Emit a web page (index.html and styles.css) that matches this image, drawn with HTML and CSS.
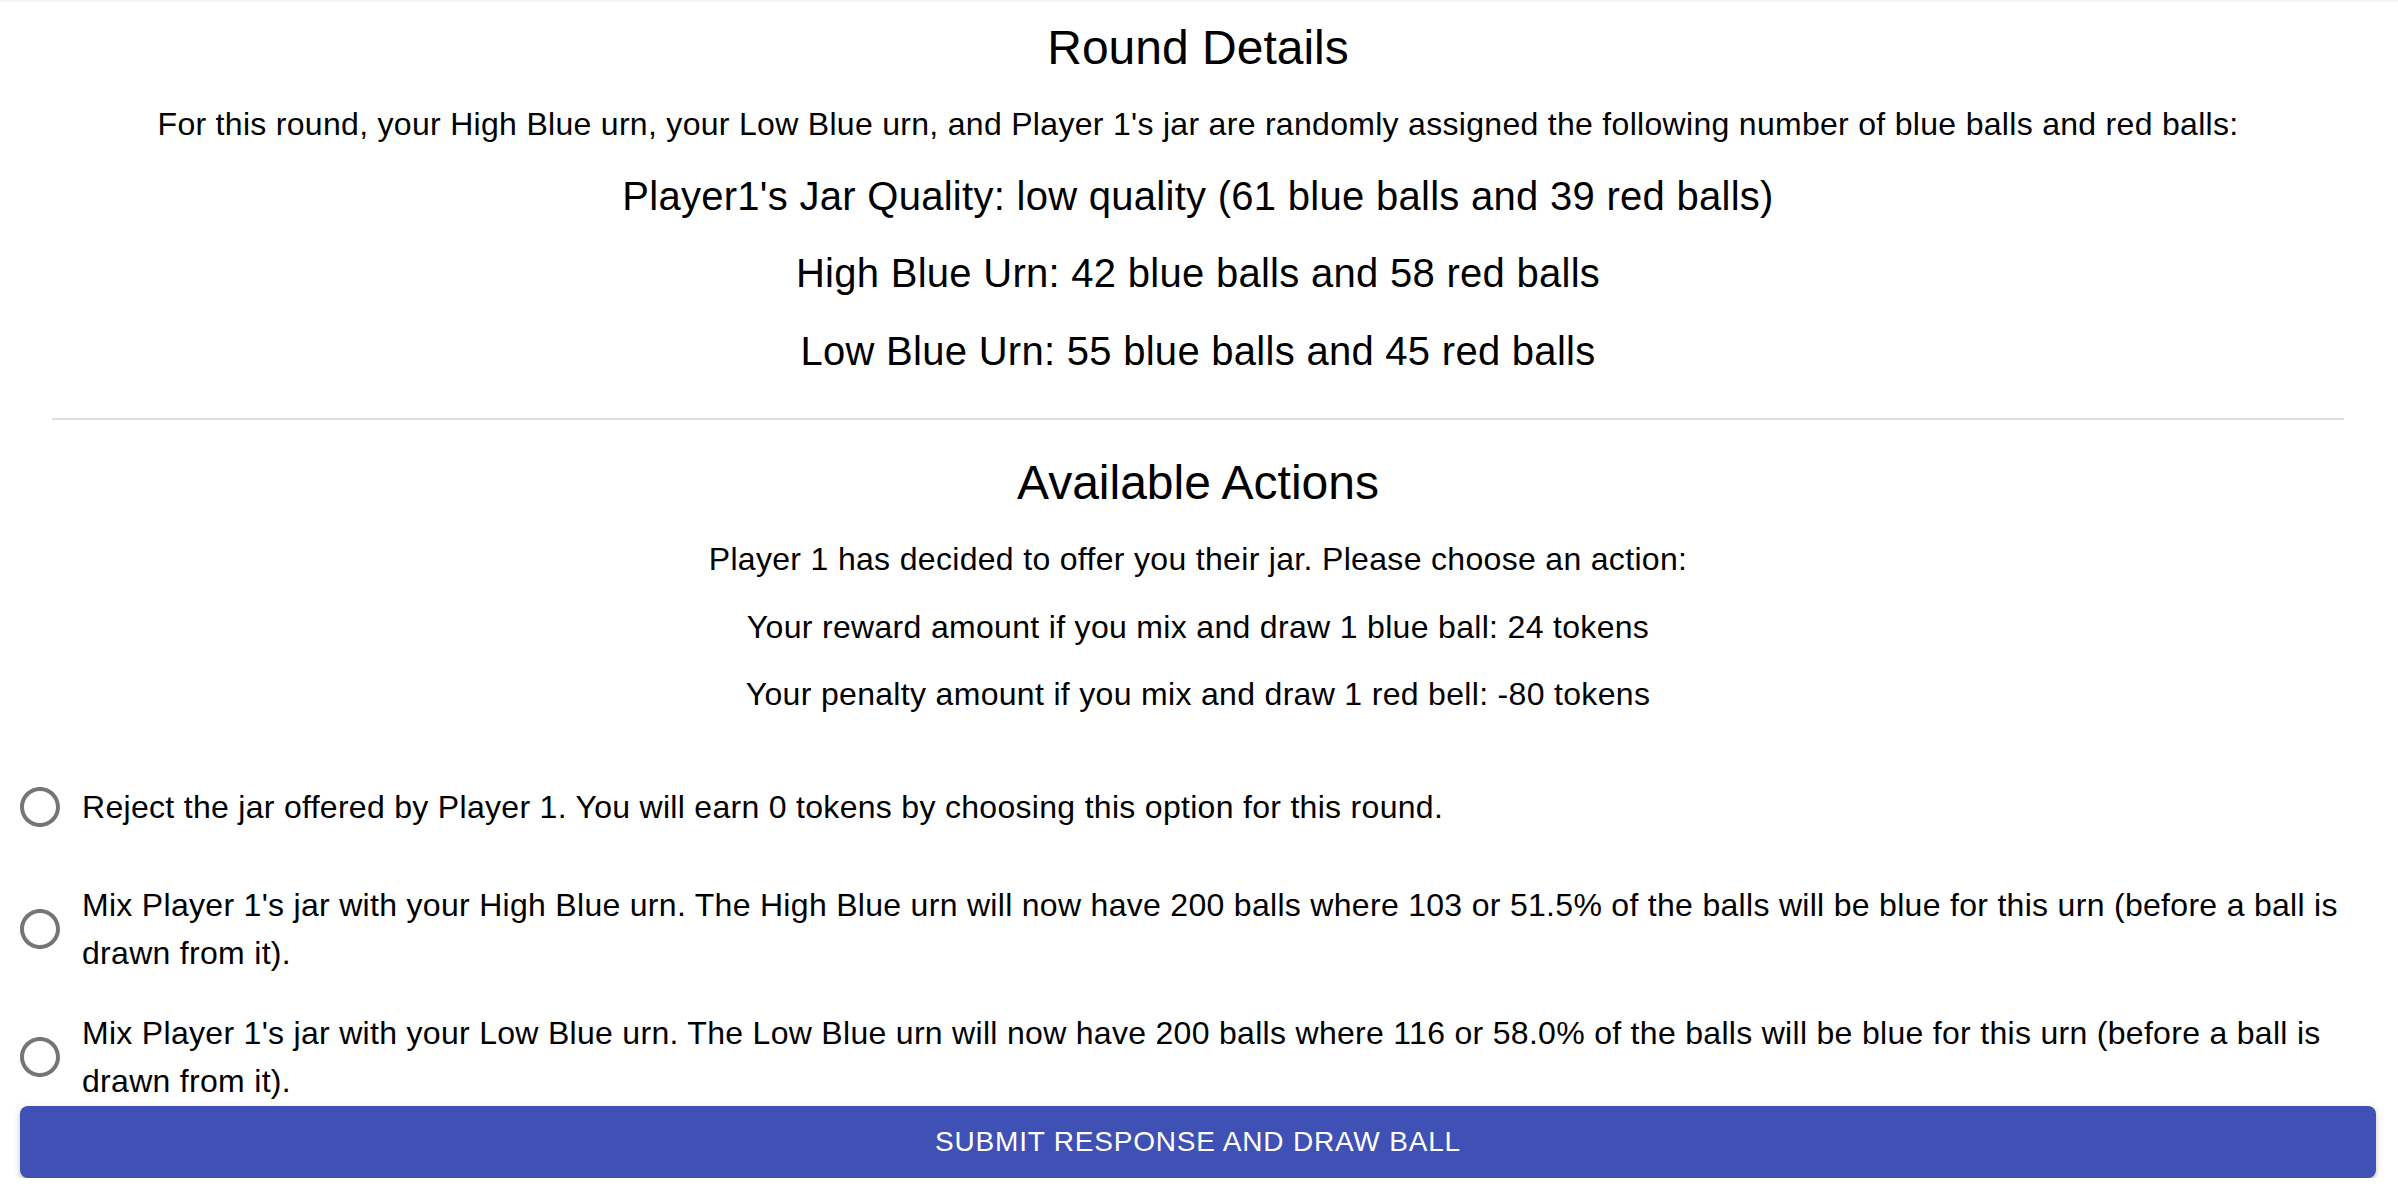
FILE: index.html
```html
<!DOCTYPE html>
<html lang="en">
<head>
<meta charset="utf-8">
<title>Round Details</title>
<link rel="stylesheet" href="styles.css">
</head>
<body>
<div class="page">
  <section class="details">
    <h2 class="title">Round Details</h2>
    <p class="intro">For this round, your High Blue urn, your Low Blue urn, and Player 1's jar are randomly assigned the following number of blue balls and red balls:</p>
    <p class="stat stat-first">Player1's Jar Quality: low quality (61 blue balls and 39 red balls)</p>
    <p class="stat stat-second">High Blue Urn: 42 blue balls and 58 red balls</p>
    <p class="stat stat-third">Low Blue Urn: 55 blue balls and 45 red balls</p>
  </section>
  <hr class="divider">
  <section class="actions">
    <h2 class="title title-actions">Available Actions</h2>
    <p class="info">Player 1 has decided to offer you their jar. Please choose an action:</p>
    <p class="info">Your reward amount if you mix and draw 1 blue ball: 24 tokens</p>
    <p class="info info-last">Your penalty amount if you mix and draw 1 red bell: -80 tokens</p>
  </section>
  <div class="options">
    <label class="option">
      <span class="radio">
        <input type="radio" name="action" value="reject">
        <svg class="radio-icon" viewBox="0 0 24 24" aria-hidden="true"><path d="M12 2C6.48 2 2 6.48 2 12s4.48 10 10 10 10-4.48 10-10S17.52 2 12 2zm0 18c-4.42 0-8-3.58-8-8s3.58-8 8-8 8 3.58 8 8-3.58 8-8 8z"/></svg>
      </span>
      <span class="option-text">Reject the jar offered by Player 1. You will earn 0 tokens by choosing this option for this round.</span>
    </label>
    <label class="option">
      <span class="radio">
        <input type="radio" name="action" value="high">
        <svg class="radio-icon" viewBox="0 0 24 24" aria-hidden="true"><path d="M12 2C6.48 2 2 6.48 2 12s4.48 10 10 10 10-4.48 10-10S17.52 2 12 2zm0 18c-4.42 0-8-3.58-8-8s3.58-8 8-8 8 3.58 8 8-3.58 8-8 8z"/></svg>
      </span>
      <span class="option-text">Mix Player 1's jar with your High Blue urn. The High Blue urn will now have 200 balls where 103 or 51.5% of the balls will be blue for this urn (before a ball is drawn from it).</span>
    </label>
    <label class="option">
      <span class="radio">
        <input type="radio" name="action" value="low">
        <svg class="radio-icon" viewBox="0 0 24 24" aria-hidden="true"><path d="M12 2C6.48 2 2 6.48 2 12s4.48 10 10 10 10-4.48 10-10S17.52 2 12 2zm0 18c-4.42 0-8-3.58-8-8s3.58-8 8-8 8 3.58 8 8-3.58 8-8 8z"/></svg>
      </span>
      <span class="option-text">Mix Player 1's jar with your Low Blue urn. The Low Blue urn will now have 200 balls where 116 or 58.0% of the balls will be blue for this urn (before a ball is drawn from it).</span>
    </label>
  </div>
  <button class="submit" type="button">Submit Response and Draw Ball</button>
</div>
</body>
</html>
```

FILE: styles.css
```css
html, body {
  margin: 0;
  padding: 0;
  background: #ffffff;
}

body {
  font-family: "Liberation Sans", Arial, Helvetica, sans-serif;
  color: #000000;
  border-top: 2px solid #f3f3f3;
}

.page {
  padding: 14px 22px 0 20px;
}

.details,
.actions {
  text-align: center;
}

.title {
  margin: 0;
  font-size: 48px;
  line-height: 64px;
  font-weight: 400;
}

.title-actions {
  margin-top: 31px;
}

.intro {
  margin: 20px 0 0;
  font-size: 32px;
  line-height: 48px;
  letter-spacing: 0.3px;
}

.stat {
  margin: 0;
  font-size: 40px;
  line-height: 64px;
  letter-spacing: 0.28px;
}

.stat-first {
  margin-top: 16px;
}

.stat-second {
  margin-top: 13px;
}

.stat-third {
  margin-top: 14px;
}

.divider {
  margin: 35px 32px 0;
  height: 2px;
  border: 0;
  background: #e0e0e0;
}

.info {
  margin: 20px 0 0;
  font-size: 32px;
  line-height: 48px;
  letter-spacing: 0.32px;
}

.info-last {
  margin-top: 19px;
}

.options {
  margin-top: 47px;
  display: flex;
  flex-direction: column;
  gap: 32px;
}

.option {
  display: flex;
  align-items: center;
  margin-left: -22px;
  cursor: pointer;
}

.radio {
  position: relative;
  flex: 0 0 auto;
  width: 48px;
  height: 48px;
  padding: 18px;
}

.radio input {
  position: absolute;
  inset: 0;
  margin: 0;
  opacity: 0;
  cursor: pointer;
}

.radio-icon {
  display: block;
  width: 48px;
  height: 48px;
  fill: rgba(0, 0, 0, 0.54);
}

.option-text {
  font-size: 32px;
  line-height: 48px;
  letter-spacing: 0.3px;
}

.submit {
  display: block;
  width: 100%;
  height: 72px;
  margin-top: 1px;
  padding: 0 32px;
  border: 0;
  border-radius: 8px;
  background: #3f51b5;
  color: #ffffff;
  font-family: "Liberation Sans", Arial, Helvetica, sans-serif;
  font-size: 28px;
  font-weight: 400;
  letter-spacing: 0.02857em;
  text-transform: uppercase;
  box-shadow: 0 6px 2px -4px rgba(0, 0, 0, 0.2), 0 4px 4px 0 rgba(0, 0, 0, 0.14), 0 2px 10px 0 rgba(0, 0, 0, 0.12);
  cursor: pointer;
}
```
